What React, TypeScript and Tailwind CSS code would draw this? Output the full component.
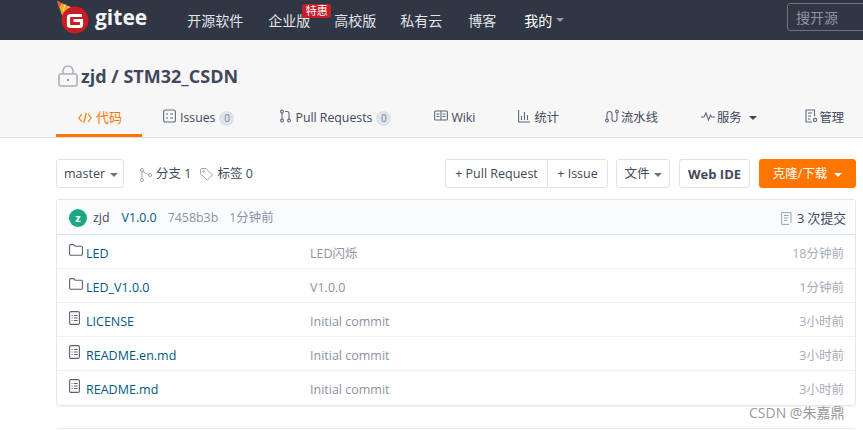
import React from 'react';

const FONT = '"Open Sans", "Noto Sans CJK SC", sans-serif';

const Caret = ({ className = 'border-t-[#6b7280]' }: { className?: string }) => (
  <span className={`inline-block w-0 h-0 border-x-[4px] border-x-transparent border-t-[4px] ${className}`} />
);

const GiteeLogo = () => (
  <svg width="36" height="34" viewBox="0 0 36 34" className="shrink-0">
    <path d="M1 1 L17 8 L7 18 Z" fill="#f5a623" />
    <path d="M1 1 L6 3.2 L3 7 Z" fill="#e2553d" />
    <path d="M9 4.5 L7 11 M13 6.5 L11 12" stroke="#fbe3a5" strokeWidth="1" />
    <circle cx="19" cy="20" r="13.5" fill="#c71d23" />
    <path d="M26 15.5 H14.5 a2 2 0 0 0 -2 2 V24.5 a2 2 0 0 0 2 2 H23.5 a2 2 0 0 0 2 -2 V20.5 H17.5" fill="none" stroke="#fff" strokeWidth="3.2" />
  </svg>
);

const LockIcon = () => (
  <svg width="20" height="22" viewBox="0 0 20 22" fill="none" stroke="#a9b0bf" strokeWidth="1.6" className="shrink-0">
    <rect x="1" y="9" width="18" height="12" rx="1.5" />
    <path d="M5 9 V6 a5 5 0 0 1 10 0 V9" />
    <path d="M10 14 v2" stroke="#8a93a5" strokeWidth="2" />
  </svg>
);

const FolderIcon = () => (
  <svg width="14" height="12" viewBox="0 0 14 12" fill="none" stroke="#5a6273" strokeWidth="1.1" className="shrink-0 -mt-2.5">
    <path d="M.6 10.2 V1.6 a1 1 0 0 1 1-1 h3.2 l1.4 1.7 h6.2 a1 1 0 0 1 1 1 v6.9 a1 1 0 0 1-1 1 H1.6 a1 1 0 0 1-1-1 Z" />
  </svg>
);

const FileIcon = () => (
  <svg width="11" height="14" viewBox="0 0 11 14" fill="none" stroke="#5a6273" strokeWidth="1.1" className="shrink-0 -mt-2.5">
    <rect x=".6" y=".6" width="9.8" height="12.8" rx="1.4" />
    <path d="M2.6 4.5 h1 M5 4.5 h3.5 M2.6 7 h1 M5 7 h3.5 M2.6 9.5 h1 M5 9.5 h3.5" />
  </svg>
);

const TabIcon = ({ children, w = 13 }: { children: React.ReactNode; w?: number }) => (
  <svg width={w} height="14" viewBox={`0 0 ${w} 14`} fill="none" stroke="#5f6b80" strokeWidth="1.1" className="shrink-0 -mt-1">
    {children}
  </svg>
);

const Badge = ({ children }: { children: React.ReactNode }) => (
  <span className="flex items-center justify-center w-[15px] h-[15px] rounded-full bg-[#dfe3e9] text-[10px] text-[#6a85ad]">
    {children}
  </span>
);

const navItems = [
  { label: '开源软件', ml: 'ml-10' },
  { label: '企业版', ml: 'ml-[25px]' },
  { label: '高校版', ml: 'ml-6' },
  { label: '私有云', ml: 'ml-6' },
  { label: '博客', ml: 'ml-[26px]' },
];

const rows = [
  { name: 'LED', dir: true, msg: 'LED闪烁', time: '18分钟前' },
  { name: 'LED_V1.0.0', dir: true, msg: 'V1.0.0', time: '1分钟前' },
  { name: 'LICENSE', dir: false, msg: 'Initial commit', time: '3小时前' },
  { name: 'README.en.md', dir: false, msg: 'Initial commit', time: '3小时前' },
  { name: 'README.md', dir: false, msg: 'Initial commit', time: '3小时前' },
];

const btn = 'flex items-center justify-center h-[29px] border rounded-[3px] text-[12.5px] pt-[2px]';
const btnLight = `${btn} bg-white border-[#dce3e8] text-[#40485b]`;

export default function App() {
  return (
    <div className="w-[863px] h-[430px] overflow-hidden bg-white relative" style={{ fontFamily: FONT }}>
      {/* top nav */}
      <div className="flex items-center h-10 bg-[#303643] pl-[56px] text-[14px] text-[#e1e4ea]">
        <div className="flex items-center -mt-1.5">
          <GiteeLogo />
          <span className="ml-[3px] text-[21px] font-bold text-[#f2f3f5] leading-none">gitee</span>
        </div>
        {navItems.map(item => (
          <span key={item.label} className={`relative whitespace-nowrap ${item.ml}`}>
            {item.label}
            {item.label === '企业版' && (
              <span className="absolute -top-[6px] left-[34px] w-[29px] h-[14px] flex items-center justify-center rounded-[2px] bg-[#c41e2a] text-[11px] leading-none text-white">
                特惠
              </span>
            )}
          </span>
        ))}
        <span className="ml-7 text-white whitespace-nowrap">我的</span>
        <Caret className="ml-1 border-t-[#9aa0ac]" />
        <div className="ml-auto mr-[-24px] shrink-0 w-[100px] h-[28px] flex items-center pl-2 border border-[#6b7280] rounded-[3px] text-[#8f95a1] -mt-1.5">
          搜开源
        </div>
      </div>

      {/* repo header */}
      <div className="h-[98px] bg-[#f7f7f7] border-b border-[#e0e0e0] pl-[58px]">
        <div className="flex items-center gap-[3px] pt-[10px] h-[62px]">
          <LockIcon />
          <span className="text-[18px] font-bold text-[#40485b] leading-none">zjd / STM32_CSDN</span>
        </div>
        <div className="flex items-center h-[32px] text-[12.3px] text-[#40485b] whitespace-nowrap">
          <div className="relative flex items-center gap-1 ml-[20px] text-[#ff7500] text-[13px]">
            <svg width="14" height="12" viewBox="0 0 14 12" fill="none" stroke="#ff7500" strokeWidth="1.1" className="shrink-0">
              <path d="M4 2 L.8 6 L4 10 M10 2 L13.2 6 L10 10 M8.2 1 L5.8 11" />
            </svg>
            代码
            <span className="absolute left-[-22px] top-[26px] w-[86px] h-[3px] bg-[#ff7500]" />
          </div>
          <div className="flex items-center gap-1 ml-[41px]">
            <TabIcon>
              <rect x=".6" y="1" width="11.8" height="12" rx="2" />
              <path d="M3 5 h2 M7 5 h3 M3 9 h2 M7 9 h3" />
            </TabIcon>
            Issues
            <Badge>0</Badge>
          </div>
          <div className="flex items-center gap-1 ml-[46px]">
            <TabIcon w={11}>
              <circle cx="2" cy="2.5" r="1.4" />
              <circle cx="2" cy="11.5" r="1.4" />
              <circle cx="9" cy="11.5" r="1.4" />
              <path d="M2 4 v6 M9 10 V4.5 a2 2 0 0 0-2-2 H5" />
            </TabIcon>
            Pull Requests
            <Badge>0</Badge>
          </div>
          <div className="flex items-center gap-[3px] ml-[43px]">
            <TabIcon w={14}>
              <rect x=".6" y="2" width="12.8" height="9" rx="1" />
              <path d="M7 2 v9 M2.5 5 h3 M2.5 7.5 h3 M8.5 5 h3 M8.5 7.5 h3" />
            </TabIcon>
            Wiki
          </div>
          <div className="flex items-center gap-1 ml-[43px]">
            <TabIcon w={12}>
              <path d="M.6 1 V13 H12 M3.5 11 V7 M6.5 11 V3 M9.5 11 V6" />
            </TabIcon>
            统计
          </div>
          <div className="flex items-center gap-[2px] ml-[46px]">
            <TabIcon w={14}>
              <circle cx="2" cy="11.5" r="1.4" />
              <circle cx="12" cy="2.5" r="1.4" />
              <path d="M2 10 V5 a2.5 2.5 0 0 1 5 0 v5 a2.5 2.5 0 0 0 5 0 V4" />
            </TabIcon>
            流水线
          </div>
          <div className="flex items-center gap-[2px] ml-[43px]">
            <TabIcon w={14}>
              <path d="M0 8 H3 L5 4 L7.5 11 L9.5 6 L10.5 8 H14" />
            </TabIcon>
            服务
            <Caret className="ml-[5px] border-t-[#40485b]" />
          </div>
          <div className="flex items-center gap-[3px] ml-[48px]">
            <TabIcon w={12}>
              <path d="M9.5 7 V1 H1 V13 H7 M3 4 h4 M3 7 h3 M3 10 h2.5" />
              <circle cx="10" cy="11" r="1.6" />
            </TabIcon>
            管理
          </div>
        </div>
      </div>

      {/* branch toolbar */}
      <div className="flex items-center mt-[21px] pl-[56px] pr-[7px] whitespace-nowrap">
        <div className={`${btnLight} w-[68px] gap-[5px] pl-[2px]`}>
          master <Caret />
        </div>
        <div className="flex items-center gap-1 ml-4 text-[12.5px] text-[#40485b] pt-[2px]">
          <svg width="12" height="14" viewBox="0 0 12 14" fill="none" stroke="#9aa3b2" strokeWidth="1">
            <circle cx="2" cy="2" r="1.5" />
            <circle cx="2" cy="12" r="1.5" />
            <circle cx="10" cy="7" r="1.5" />
            <path d="M2 3.5 V10.5 M2.8 3.5 L8.6 6.6" />
          </svg>
          分支 1
        </div>
        <div className="flex items-center gap-1 ml-[9px] text-[12.5px] text-[#40485b] pt-[2px]">
          <svg width="13" height="13" viewBox="0 0 13 13" fill="none" stroke="#9aa3b2" strokeWidth="1">
            <path d="M.6 1.5 a1 1 0 0 1 1-1 H6 L12.4 7 L7.4 12.2 L.6 5.8 Z" />
            <circle cx="3.4" cy="3.4" r=".8" />
          </svg>
          标签 0
        </div>
        <div className="ml-auto flex">
          <div className={`${btnLight} w-[103px] rounded-r-none`}>+ Pull Request</div>
          <div className={`${btnLight} w-[61px] -ml-px rounded-l-none`}>+ Issue</div>
        </div>
        <div className={`${btnLight} w-[54px] ml-2 gap-1`}>
          文件 <Caret />
        </div>
        <div className={`${btnLight} w-[71px] ml-[9px] font-bold text-[13px]`}>Web IDE</div>
        <div className={`${btn} w-[97px] ml-[9px] gap-[7px] bg-[#ff7500] border-[#ff7500] text-white`}>
          克隆/下载 <Caret className="border-t-white" />
        </div>
      </div>

      {/* file table */}
      <div className="ml-[56px] mt-[11px] w-[800px] bg-white border border-[#e3e9ed] rounded-[3px] shadow-[0_1px_1px_rgba(0,0,0,0.06)]">
        <div className="flex items-center justify-between h-[35px] bg-[#fafbfc] border-b border-[#dce3e8] pl-3 pr-[9px] pt-[3px] text-[12.4px]">
          <div className="flex items-center whitespace-nowrap">
            <span className="flex items-center justify-center w-[18px] h-[18px] rounded-full bg-[#1ba784] text-[11px] font-bold text-white">z</span>
            <span className="ml-[6px] text-[#40485b]">zjd</span>
            <span className="ml-3 text-[#005980]">V1.0.0</span>
            <span className="ml-[11px] text-[#8c92a4]">7458b3b</span>
            <span className="ml-[11px] text-[#8c92a4]">1分钟前</span>
          </div>
          <div className="flex items-center gap-[5px] text-[12.8px] text-[#40485b] whitespace-nowrap">
            <svg width="11" height="13" viewBox="0 0 11 13" fill="none" stroke="#9aa3b2" strokeWidth="1">
              <path d="M10 11 V.6 H.6 V12.4 H8 M3 3.5 h4.5 M3 6 h4.5 M3 8.5 h3" />
            </svg>
            3 次提交
          </div>
        </div>
        {rows.map(row => (
          <div key={row.name} className="flex items-center h-[34px] border-b border-[#eef1f4] last:border-b-transparent pl-3 pr-[11px] pt-[6px] text-[12.5px] whitespace-nowrap">
            <div className="flex items-center w-[241px]">
              <span className="flex justify-start w-[17px]">{row.dir ? <FolderIcon /> : <FileIcon />}</span>
              <span className="text-[#005980]">{row.name}</span>
            </div>
            <span className="text-[#8c92a4]">{row.msg}</span>
            <span className="ml-auto text-[#a5abb8]">{row.time}</span>
          </div>
        ))}
      </div>

      {/* next card, cut off by the window edge */}
      <div className="ml-[56px] mt-[22px] w-[800px] h-8 border border-[#e3e9ed] rounded-[3px]" />

      <span className="absolute left-[749px] top-[404px] text-[14px] leading-[18px] text-[#999999]">CSDN @朱嘉鼎</span>
    </div>
  );
}
